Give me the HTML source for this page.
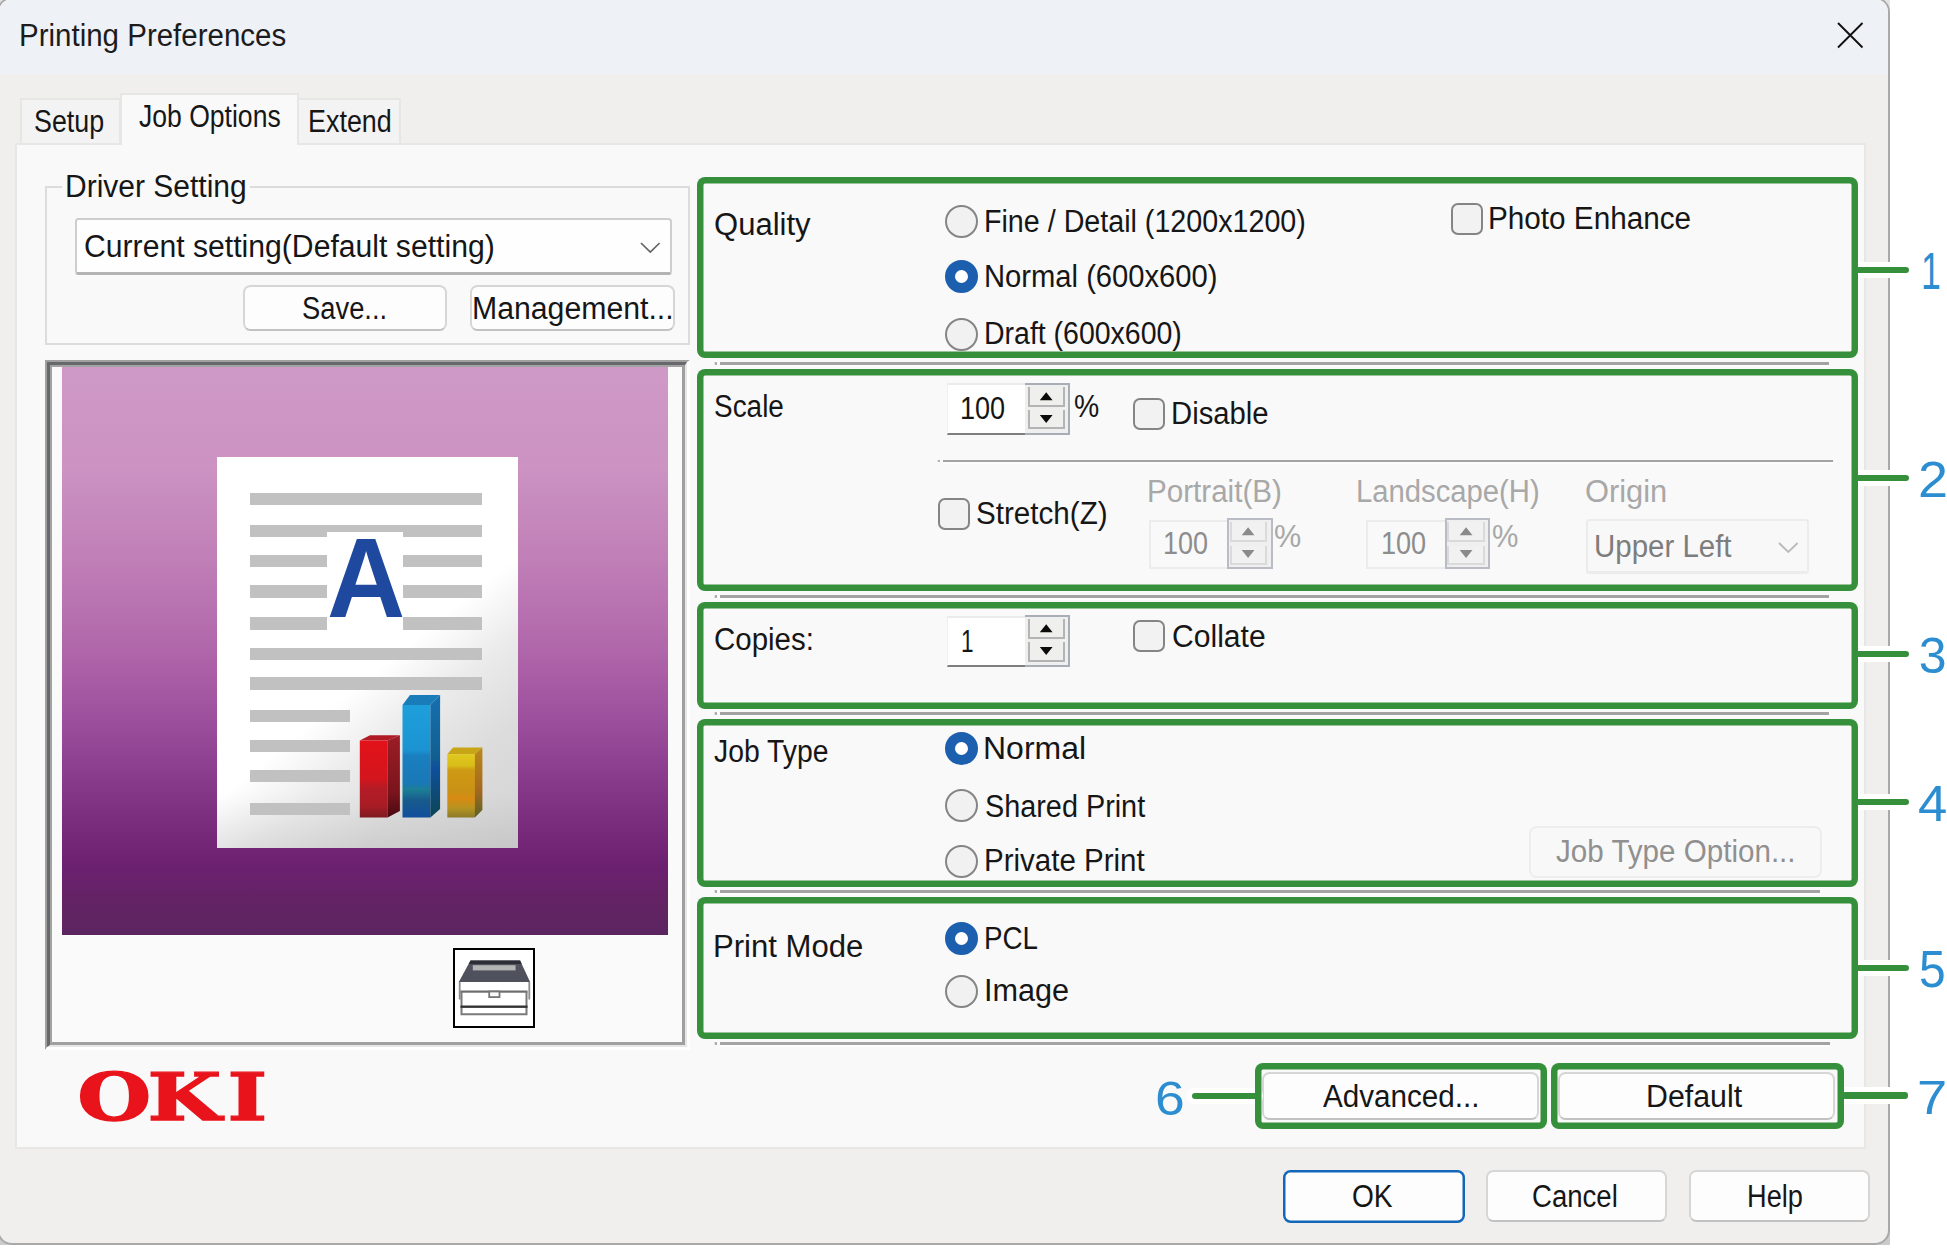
<!DOCTYPE html>
<html lang="en">
<head>
<meta charset="utf-8">
<title>Printing Preferences</title>
<style>
html,body{margin:0;padding:0;background:#fff;}
body{width:1947px;height:1253px;position:relative;overflow:hidden;font-family:'Liberation Sans',sans-serif;}
.a{position:absolute;box-sizing:border-box;}
.t{position:absolute;white-space:pre;transform-origin:0 0;display:block;}
#winbg{left:0;top:0;width:1890px;height:1245px;background:linear-gradient(180deg,#e3e3e3 0,#e3e3e3 50%,#cbcbcb 50%);}
#win{left:-3px;top:-3px;width:1893px;height:1248px;background:#f0efed;border:2.6px solid #a9a9a9;border-radius:15px;overflow:hidden;}
#titlebar{left:0;top:0;width:1892px;height:74.9px;background:#eef2f7;}
#panel{left:15.3px;top:142.6px;width:1851px;height:1006.6px;background:#f9f9f9;border:2px solid #e7e7e6;}
.tab{background:#f3f3f3;border:2px solid #e6e6e5;border-bottom:none;}
.tab.sel{background:#f9f9f9;}
.grp{border:2px solid #dcdcdc;}
.btn{background:#fdfdfd;border:2px solid #d6d6d6;border-bottom-color:#c2c2c2;border-radius:7.5px;}
.btn.dis{background:#f8f8f8;border-color:#ededed;}
.btn.def{border:0 solid #1267b9;box-shadow:inset 0 0 0 2.5px #1267b9;}
.combo{background:#fefefe;border:2px solid #cecece;border-bottom-color:#b4b4b4;border-bottom-width:3px;border-radius:3.5px;}
.combo.dis{background:#f8f8f8;border-color:#ececec;}
.gbox{border:0;box-shadow:inset 0 0 0 6.5px #36903b;border-radius:8px;}
.sep{height:2.6px;margin-top:-0.3px;background:#a3a3a3;box-shadow:0 2px 0 #fdfdfd,-5.5px 0 0 -0.2px #a3a3a3;}
.sep::before{content:'';position:absolute;left:-3.4px;top:0;width:3.4px;height:4px;background:#f9f9f9;}
.logo{position:absolute;left:0;top:0;}
.radio{width:33px;height:33px;border-radius:50%;background:#f1f1f1;border:2.5px solid #858585;}
.radio.on{background:#fff;border:10.2px solid #1b5fae;}
.chk{width:32px;height:32px;border-radius:7px;background:#f2f2f2;border:2.3px solid #858585;}
.edit{background:#fff;border-top:2px solid #ebebeb;border-left:1px solid #f0f0f0;border-bottom:2.5px solid #7e7e7e;}
.edit.dis{background:#f9f9f9;border:2px solid #ececec;}
.spin{background:#efefef;border:2.4px solid #a9adb6;border-left-width:0;}
.spin.dis{border-color:#b9bcc4;border-left-width:2.4px;}
.sbtn{background:#efefee;border:2px solid #b4b4b4;border-top:none;}
.spin.dis .sbtn{border-color:#dadada;background:#f1f1f1;}
.call{height:6.4px;background:#36903b;border-radius:3px;box-shadow:0 0 0 5px #fff;}
svg{position:absolute;overflow:visible;}
</style>
</head>
<body>
<div id="winbg" class="a"></div>
<div id="win" class="a">
  <div id="titlebar" class="a"></div>
</div>
<!-- close X -->
<svg style="left:1837px;top:22px" width="27" height="27" viewBox="0 0 27 27"><path d="M1 1 L25.5 25.5 M25.5 1 L1 25.5" stroke="#111" stroke-width="1.9" fill="none"/></svg>

<!-- tabs -->
<div class="a tab" style="left:20.2px;top:98px;width:101px;height:47px"></div>
<div class="a tab" style="left:297px;top:98px;width:104px;height:47px"></div>
<div id="panel" class="a"></div>
<div class="a tab sel" style="left:120.2px;top:93.2px;width:179px;height:52.3px"></div>

<!-- Driver Setting group -->
<div class="a grp" style="left:45px;top:186px;width:645px;height:158.5px"></div>
<div class="a" style="left:62px;top:176px;width:188px;height:24px;background:#f9f9f9"></div>
<div class="a combo" style="left:74.5px;top:217.5px;width:597px;height:57px"></div>
<svg style="left:640px;top:241.5px" width="21" height="12" viewBox="0 0 21 12"><path d="M1 1 L10.3 10 L19.6 1" stroke="#646464" stroke-width="1.7" fill="none"/></svg>
<div class="a btn" style="left:242.5px;top:284.7px;width:204.5px;height:46.8px"></div>
<div class="a btn" style="left:469.5px;top:284.7px;width:205.5px;height:46.8px"></div>

<!-- preview -->
<div class="a" style="left:45px;top:360px;width:645px;height:690px;border-style:solid;border-width:2px 3px 3px 2px;border-color:#a0a0a0 #fff #fff #a0a0a0;">
 <div class="a" style="left:0;top:0;right:0;bottom:0;border-style:solid;border-width:3px 2px 2px 3px;border-color:#67686b #e7e7e5 #e7e7e5 #67686b;">
  <div class="a" style="left:0;top:0;right:0;bottom:0;background:#fafafa;border-style:solid;border-width:2px 3px 3px 2px;border-color:#a3a3a3 #a0a0a0 #a0a0a0 #a3a3a3;"></div>
 </div>
</div>
<div class="a" id="purple" style="left:62.3px;top:367px;width:605.3px;height:568px;background:linear-gradient(180deg,#cf99c6 0%,#cb92c2 18%,#c07fb7 34%,#b066aa 50%,#a0539f 60%,#8d4090 70%,#7a2d7c 80%,#6c2070 88%,#632364 94%,#5c2560 100%);"></div>
<div class="a" id="paper" style="left:217.3px;top:457px;width:300.3px;height:390.6px;background:linear-gradient(180deg,rgba(0,0,0,0) 86%,rgba(0,0,0,.06) 100%),linear-gradient(141deg,#fff 0%,#fff 54%,#ebebeb 66%,#dcdcdc 80%,#d3d3d3 100%);"></div>
<div class="a" style="left:250px;top:492.5px;width:232.4px;height:12.5px;background:#c1c1c1"></div>
<div class="a" style="left:250px;top:525.2px;width:232.4px;height:12.3px;background:#c1c1c1"></div>
<div class="a" style="left:250px;top:555px;width:232.4px;height:12.4px;background:#c1c1c1"></div>
<div class="a" style="left:250px;top:585px;width:232.4px;height:12.5px;background:#c1c1c1"></div>
<div class="a" style="left:250px;top:617.4px;width:232.4px;height:12.6px;background:#c1c1c1"></div>
<div class="a" style="left:250px;top:647.5px;width:232.4px;height:12.4px;background:#c1c1c1"></div>
<div class="a" style="left:250px;top:677.4px;width:232.4px;height:12.5px;background:#c1c1c1"></div>
<div class="a" style="left:250px;top:709.9px;width:99.9px;height:12.4px;background:#c1c1c1"></div>
<div class="a" style="left:250px;top:740.1px;width:99.9px;height:12.4px;background:#c1c1c1"></div>
<div class="a" style="left:250px;top:770px;width:99.9px;height:12.4px;background:#c1c1c1"></div>
<div class="a" style="left:250px;top:802.5px;width:99.9px;height:12.5px;background:#c1c1c1"></div>
<div class="a" style="left:327.4px;top:532.2px;width:75.2px;height:98px;background:#fff"></div>
<svg style="left:355px;top:690px" width="135" height="132" viewBox="355 690 135 132">
<defs>
<linearGradient id="gr" x1="0" y1="0" x2="0" y2="1"><stop offset="0" stop-color="#e21219"/><stop offset="0.5" stop-color="#d4151d"/><stop offset="0.62" stop-color="#b41c26"/><stop offset="0.85" stop-color="#a81c25"/><stop offset="1" stop-color="#7e1a20"/></linearGradient>
<linearGradient id="grs" x1="0" y1="0" x2="0" y2="1"><stop offset="0" stop-color="#9c1d26"/><stop offset="0.7" stop-color="#7a141c"/><stop offset="1" stop-color="#4a0810"/></linearGradient>
<linearGradient id="gb" x1="0" y1="0" x2="0" y2="1"><stop offset="0" stop-color="#1e9fdc"/><stop offset="0.4" stop-color="#1b93d2"/><stop offset="0.45" stop-color="#1a7fc0"/><stop offset="0.7" stop-color="#1a78b6"/><stop offset="0.75" stop-color="#1c7f96"/><stop offset="0.85" stop-color="#175a8c"/><stop offset="1" stop-color="#114f9c"/></linearGradient>
<linearGradient id="gbs" x1="0" y1="0" x2="0" y2="1"><stop offset="0" stop-color="#1670b0"/><stop offset="0.5" stop-color="#115f90"/><stop offset="0.6" stop-color="#0f4f9c"/><stop offset="1" stop-color="#0d4552"/></linearGradient>
<linearGradient id="gy" x1="0" y1="0" x2="0" y2="1"><stop offset="0" stop-color="#e0c81c"/><stop offset="0.18" stop-color="#d9bd19"/><stop offset="0.25" stop-color="#cf9a14"/><stop offset="0.6" stop-color="#c99115"/><stop offset="0.7" stop-color="#d98a12"/><stop offset="0.85" stop-color="#b59420"/><stop offset="1" stop-color="#8c7a2a"/></linearGradient>
<linearGradient id="gys" x1="0" y1="0" x2="0" y2="1"><stop offset="0" stop-color="#b8891a"/><stop offset="0.6" stop-color="#a66a1e"/><stop offset="1" stop-color="#5c6228"/></linearGradient>
</defs>
<path d="M359.8 740.5 L370 735.2 L399.9 735.2 L387.6 740.5 Z" fill="#b11a24"/>
<rect x="359.8" y="740.5" width="27.9" height="77" fill="url(#gr)"/>
<path d="M387.6 740.5 L399.9 735.2 L399.9 811 L387.6 817.5 Z" fill="url(#grs)"/>
<path d="M402.5 705 L410 695 L440.1 695 L430.4 705 Z" fill="#1a7cb8"/>
<rect x="402.5" y="705" width="28" height="112.5" fill="url(#gb)"/>
<path d="M430.4 705 L440.1 695 L440.1 809 L430.4 817.5 Z" fill="url(#gbs)"/>
<path d="M447.3 754.2 L453 747.5 L482.4 747.5 L474.9 754.2 Z" fill="#c9a416"/>
<rect x="447.3" y="754.2" width="27.7" height="63.3" fill="url(#gy)"/>
<path d="M474.9 754.2 L482.4 747.5 L482.4 810 L474.9 817.5 Z" fill="url(#gys)"/>
</svg>
<!-- printer icon -->
<div class="a" style="left:452.5px;top:947.5px;width:82.5px;height:80px;background:#fff;border:2.6px solid #000"></div>
<svg style="left:452.5px;top:947.5px" width="82.5" height="80" viewBox="452.5 947.5 82.5 80">
  <path d="M470 960 L519.6 960 L529.6 981.6 L458.3 981.6 Z" fill="#4f515d"/>
  <path d="M470 960 L519.6 960 L521.2 963.6 L468.2 963.6 Z" fill="#2c2d36"/>
  <rect x="472.3" y="964.7" width="42.8" height="5.2" fill="#b4b4b4"/>
  <rect x="458.4" y="981.6" width="71.2" height="9" fill="#fff"/>
  <path d="M459.2 981.6 V999 M528.8 981.6 V999" stroke="#8c8c8c" stroke-width="1.8" fill="none"/>
  <rect x="460" y="990" width="67" height="2.2" fill="#6c6c6c"/>
  <rect x="488.7" y="991" width="10.3" height="5.6" fill="#fff" stroke="#777" stroke-width="1.8"/>
  <path d="M461 991 V1013.8 H526 V991" stroke="#7a7a7a" stroke-width="2" fill="none"/>
  <rect x="460" y="1005" width="67" height="2.4" fill="#333"/>
</svg>

<!-- separators -->
<div class="a sep" style="left:720px;top:362.5px;width:1109px"></div>
<div class="a sep" style="left:720px;top:595.3px;width:1109px"></div>
<div class="a sep" style="left:720px;top:712.3px;width:1109px"></div>
<div class="a sep" style="left:720px;top:890.4px;width:1100px"></div>
<div class="a sep" style="left:720px;top:1042.5px;width:1110px"></div>
<div class="a sep" style="left:943px;top:460px;width:889.5px"></div>

<!-- radios -->
<div class="a radio" style="left:944.8px;top:204.7px"></div>
<div class="a radio on" style="left:944.8px;top:259.8px"></div>
<div class="a radio" style="left:944.8px;top:317.5px"></div>
<div class="a radio on" style="left:944.8px;top:732.2px"></div>
<div class="a radio" style="left:944.8px;top:789.2px"></div>
<div class="a radio" style="left:944.8px;top:844.7px"></div>
<div class="a radio on" style="left:944.8px;top:922.1px"></div>
<div class="a radio" style="left:944.8px;top:974.5px"></div>
<!-- checkboxes -->
<div class="a chk" style="left:1450.5px;top:203px"></div>
<div class="a chk" style="left:1133px;top:397.7px"></div>
<div class="a chk" style="left:937.6px;top:497.6px"></div>
<div class="a chk" style="left:1132.8px;top:620.2px"></div>

<!-- spin boxes -->
<div class="a edit" style="left:946.8px;top:383.0px;width:78.2px;height:51.7px"></div>
<div class="a spin" style="left:1025px;top:382.5px;width:44.8px;height:52.2px">
<div class="a sbtn" style="left:2.5px;top:2.2px;width:37.5px;height:20px"></div>
<div class="a sbtn" style="left:2.5px;top:25.3px;width:37.5px;height:19.5px"></div>
<svg style="left:0;top:0" width="42.4" height="47.4"><path d="M14.8 15.2 L21.2 7.3 L27.6 15.2 Z M14.8 30.1 L21.2 38 L27.6 30.1 Z" fill="#0a0a0a"/></svg>
</div>
<div class="a edit" style="left:946.8px;top:615.7px;width:78.2px;height:51.7px"></div>
<div class="a spin" style="left:1025px;top:615.2px;width:44.8px;height:52.2px">
<div class="a sbtn" style="left:2.5px;top:2.2px;width:37.5px;height:20px"></div>
<div class="a sbtn" style="left:2.5px;top:25.3px;width:37.5px;height:19.5px"></div>
<svg style="left:0;top:0" width="42.4" height="47.4"><path d="M14.8 15.2 L21.2 7.3 L27.6 15.2 Z M14.8 30.1 L21.2 38 L27.6 30.1 Z" fill="#0a0a0a"/></svg>
</div>
<div class="a edit dis" style="left:1148.8px;top:519.8px;width:80.6px;height:49.7px"></div>
<div class="a spin dis" style="left:1227.4px;top:518.3px;width:45.2px;height:51.2px">
<div class="a sbtn" style="left:0.3px;top:2.2px;width:37.5px;height:20px"></div>
<div class="a sbtn" style="left:0.3px;top:25.3px;width:37.5px;height:19.5px"></div>
<svg style="left:0;top:0" width="42.8" height="46.4"><path d="M12.7 15.2 L19.1 7.3 L25.5 15.2 Z M12.7 30.1 L19.1 38 L25.5 30.1 Z" fill="#8a8a8a"/></svg>
</div>
<div class="a edit dis" style="left:1365.5px;top:519.8px;width:81.5px;height:49.7px"></div>
<div class="a spin dis" style="left:1445px;top:518.3px;width:44.8px;height:51.2px">
<div class="a sbtn" style="left:0.3px;top:2.2px;width:37.5px;height:20px"></div>
<div class="a sbtn" style="left:0.3px;top:25.3px;width:37.5px;height:19.5px"></div>
<svg style="left:0;top:0" width="42.4" height="46.4"><path d="M12.7 15.2 L19.1 7.3 L25.5 15.2 Z M12.7 30.1 L19.1 38 L25.5 30.1 Z" fill="#8a8a8a"/></svg>
</div>

<!-- origin combo (disabled) -->
<div class="a combo dis" style="left:1585.7px;top:518.6px;width:223.5px;height:55.5px"></div>
<svg style="left:1778px;top:542px" width="21" height="12" viewBox="0 0 21 12"><path d="M1 1 L10.3 10 L19.6 1" stroke="#b9b9b9" stroke-width="1.8" fill="none"/></svg>

<!-- buttons -->
<div class="a btn dis" style="left:1528.8px;top:825.7px;width:292.8px;height:52.4px"></div>
<div class="a btn" style="left:1262.4px;top:1072.4px;width:277px;height:47.5px"></div>
<div class="a btn" style="left:1557.7px;top:1072.4px;width:277.3px;height:47.5px"></div>
<div class="a btn def" style="left:1282.5px;top:1169.8px;width:182.3px;height:53px"></div>
<div class="a btn" style="left:1486px;top:1170px;width:181px;height:52.3px"></div>
<div class="a btn" style="left:1688.5px;top:1170px;width:181.2px;height:52.3px"></div>

<!-- text -->
<span class="t" style="left:18.75px;top:20.05px;font-size:31px;line-height:31px;color:#1c1c1c;transform:scaleX(0.9516)">Printing Preferences</span>
<span class="t" style="left:33.87px;top:105.75px;font-size:31px;line-height:31px;color:#161616;transform:scaleX(0.8654)">Setup</span>
<span class="t" style="left:138.94px;top:100.95px;font-size:31px;line-height:31px;color:#161616;transform:scaleX(0.8564)">Job Options</span>
<span class="t" style="left:307.99px;top:105.75px;font-size:31px;line-height:31px;color:#161616;transform:scaleX(0.8685)">Extend</span>
<span class="t" style="left:64.50px;top:171.25px;font-size:31px;line-height:31px;color:#161616;transform:scaleX(0.9678)">Driver Setting</span>
<span class="t" style="left:84.35px;top:230.65px;font-size:31px;line-height:31px;color:#161616;transform:scaleX(0.9730)">Current setting(Default setting)</span>
<span class="t" style="left:302.03px;top:292.65px;font-size:31px;line-height:31px;color:#161616;transform:scaleX(0.8826)">Save...</span>
<span class="t" style="left:472.07px;top:292.65px;font-size:31px;line-height:31px;color:#161616;transform:scaleX(0.9751)">Management...</span>
<span class="t" style="left:714.40px;top:208.65px;font-size:31px;line-height:31px;color:#161616;transform:scaleX(1.0011)">Quality</span>
<span class="t" style="left:983.83px;top:205.65px;font-size:31px;line-height:31px;color:#161616;transform:scaleX(0.9245)">Fine / Detail (1200x1200)</span>
<span class="t" style="left:983.78px;top:260.85px;font-size:31px;line-height:31px;color:#161616;transform:scaleX(0.9412)">Normal (600x600)</span>
<span class="t" style="left:983.84px;top:318.45px;font-size:31px;line-height:31px;color:#161616;transform:scaleX(0.9185)">Draft (600x600)</span>
<span class="t" style="left:1487.93px;top:203.25px;font-size:31px;line-height:31px;color:#161616;transform:scaleX(0.9577)">Photo Enhance</span>
<span class="t" style="left:713.90px;top:391.05px;font-size:31px;line-height:31px;color:#161616;transform:scaleX(0.9014)">Scale</span>
<span class="t" style="left:960.25px;top:393.45px;font-size:31px;line-height:31px;color:#161616;transform:scaleX(0.8735)">100</span>
<span class="t" style="left:1073.88px;top:391.05px;font-size:31px;line-height:31px;color:#161616;transform:scaleX(0.9154)">%</span>
<span class="t" style="left:1171.17px;top:398.05px;font-size:31px;line-height:31px;color:#161616;transform:scaleX(0.9444)">Disable</span>
<span class="t" style="left:975.69px;top:498.05px;font-size:31px;line-height:31px;color:#161616;transform:scaleX(0.9552)">Stretch(Z)</span>
<span class="t" style="left:1146.54px;top:475.85px;font-size:31px;line-height:31px;color:#a8a8a8;transform:scaleX(0.9547)">Portrait(B)</span>
<span class="t" style="left:1355.97px;top:475.95px;font-size:31px;line-height:31px;color:#a8a8a8;transform:scaleX(0.9432)">Landscape(H)</span>
<span class="t" style="left:1585.31px;top:475.95px;font-size:31px;line-height:31px;color:#a8a8a8;transform:scaleX(0.9938)">Origin</span>
<span class="t" style="left:1163.06px;top:527.95px;font-size:31px;line-height:31px;color:#8d8d8d;transform:scaleX(0.8714)">100</span>
<span class="t" style="left:1380.75px;top:527.95px;font-size:31px;line-height:31px;color:#8d8d8d;transform:scaleX(0.8735)">100</span>
<span class="t" style="left:1273.71px;top:520.65px;font-size:31px;line-height:31px;color:#a8a8a8;transform:scaleX(0.9885)">%</span>
<span class="t" style="left:1491.84px;top:520.65px;font-size:31px;line-height:31px;color:#a8a8a8;transform:scaleX(0.9577)">%</span>
<span class="t" style="left:1594.40px;top:530.55px;font-size:31px;line-height:31px;color:#7d7d7d;transform:scaleX(0.9503)">Upper Left</span>
<span class="t" style="left:714.10px;top:623.65px;font-size:31px;line-height:31px;color:#161616;transform:scaleX(0.9500)">Copies:</span>
<span class="t" style="left:961.24px;top:626.25px;font-size:31px;line-height:31px;color:#161616;transform:scaleX(0.7286)">1</span>
<span class="t" style="left:1172.46px;top:620.65px;font-size:31px;line-height:31px;color:#161616;transform:scaleX(0.9710)">Collate</span>
<span class="t" style="left:714.29px;top:736.05px;font-size:31px;line-height:31px;color:#161616;transform:scaleX(0.9138)">Job Type</span>
<span class="t" style="left:983.41px;top:733.15px;font-size:31px;line-height:31px;color:#161616;transform:scaleX(1.0316)">Normal</span>
<span class="t" style="left:984.64px;top:790.75px;font-size:31px;line-height:31px;color:#161616;transform:scaleX(0.9294)">Shared Print</span>
<span class="t" style="left:983.64px;top:845.05px;font-size:31px;line-height:31px;color:#161616;transform:scaleX(0.9518)">Private Print</span>
<span class="t" style="left:1555.65px;top:835.75px;font-size:31px;line-height:31px;color:#909090;transform:scaleX(0.9543)">Job Type Option...</span>
<span class="t" style="left:713.19px;top:930.65px;font-size:31px;line-height:31px;color:#161616;transform:scaleX(1.0027)">Print Mode</span>
<span class="t" style="left:983.81px;top:922.95px;font-size:31px;line-height:31px;color:#161616;transform:scaleX(0.8964)">PCL</span>
<span class="t" style="left:983.54px;top:975.35px;font-size:31px;line-height:31px;color:#161616;transform:scaleX(0.9878)">Image</span>
<span class="t" style="left:1322.80px;top:1081.05px;font-size:31px;line-height:31px;color:#161616;transform:scaleX(0.9559)">Advanced...</span>
<span class="t" style="left:1646.07px;top:1081.05px;font-size:31px;line-height:31px;color:#161616;transform:scaleX(0.9779)">Default</span>
<span class="t" style="left:1352.29px;top:1181.35px;font-size:31px;line-height:31px;color:#161616;transform:scaleX(0.9070)">OK</span>
<span class="t" style="left:1532.02px;top:1181.35px;font-size:31px;line-height:31px;color:#161616;transform:scaleX(0.8891)">Cancel</span>
<span class="t" style="left:1747.37px;top:1181.35px;font-size:31px;line-height:31px;color:#161616;transform:scaleX(0.8767)">Help</span>
<span class="t" style="left:1920.64px;top:245.84px;font-size:50px;line-height:50px;color:#2c8ed0;transform:scale(0.7143,1.0229)">1</span>
<span class="t" style="left:1917.84px;top:455.64px;font-size:50px;line-height:50px;color:#2c8ed0;transform:scale(1.0783,0.9800)">2</span>
<span class="t" style="left:1918.80px;top:631.90px;font-size:50px;line-height:50px;color:#2c8ed0;transform:scale(1.0000,0.9833)">3</span>
<span class="t" style="left:1917.65px;top:778.74px;font-size:50px;line-height:50px;color:#2c8ed0;transform:scale(1.0520,0.9943)">4</span>
<span class="t" style="left:1919.18px;top:943.80px;font-size:50px;line-height:50px;color:#2c8ed0;transform:scale(0.9583,1.0286)">5</span>
<span class="t" style="left:1154.59px;top:1073.85px;font-size:50px;line-height:50px;color:#2c8ed0;transform:scale(1.0696,0.9750)">6</span>
<span class="t" style="left:1917.24px;top:1073.02px;font-size:50px;line-height:50px;color:#2c8ed0;transform:scale(1.0864,0.9686)">7</span>
<span class="t" style="left:327.10px;top:522.91px;font-size:112px;line-height:112px;color:#1e499f;font-weight:bold;transform:scale(0.9667,1.0052)">A</span>
<svg style="left:0;top:1040px" width="300" height="110" viewBox="0 1040 300 110"><text transform="translate(77.22 1119.6) scale(1.288 0.98)" x="0 54.5 116.7" y="0" font-family="'DejaVu Serif', 'Liberation Serif', serif" font-weight="bold" font-size="66" fill="#e8131b" stroke="#e8131b" stroke-width="1.4">OKI</text></svg>

<!-- callouts -->
<div class="a call" style="left:1856px;top:266.7px;width:53px"></div>
<div class="a call" style="left:1856px;top:475px;width:53px"></div>
<div class="a call" style="left:1856px;top:650.8px;width:53px"></div>
<div class="a call" style="left:1856px;top:799px;width:53px"></div>
<div class="a call" style="left:1856px;top:964.5px;width:53px"></div>
<div class="a call" style="left:1191.5px;top:1092.7px;width:66px"></div>
<div class="a call" style="left:1842px;top:1092.2px;width:66px"></div>
<!-- green boxes -->
<div class="a gbox" style="left:697px;top:176.5px;width:1161px;height:181.5px"></div>
<div class="a gbox" style="left:697px;top:369.3px;width:1161px;height:221.8px"></div>
<div class="a gbox" style="left:697px;top:601.7px;width:1161px;height:107px"></div>
<div class="a gbox" style="left:697px;top:719.4px;width:1161px;height:167.2px"></div>
<div class="a gbox" style="left:697px;top:897px;width:1161px;height:141.8px"></div>
<div class="a gbox" style="left:1255px;top:1063px;width:291.8px;height:66px"></div>
<div class="a gbox" style="left:1551px;top:1063px;width:293px;height:66px"></div>
</body>
</html>
